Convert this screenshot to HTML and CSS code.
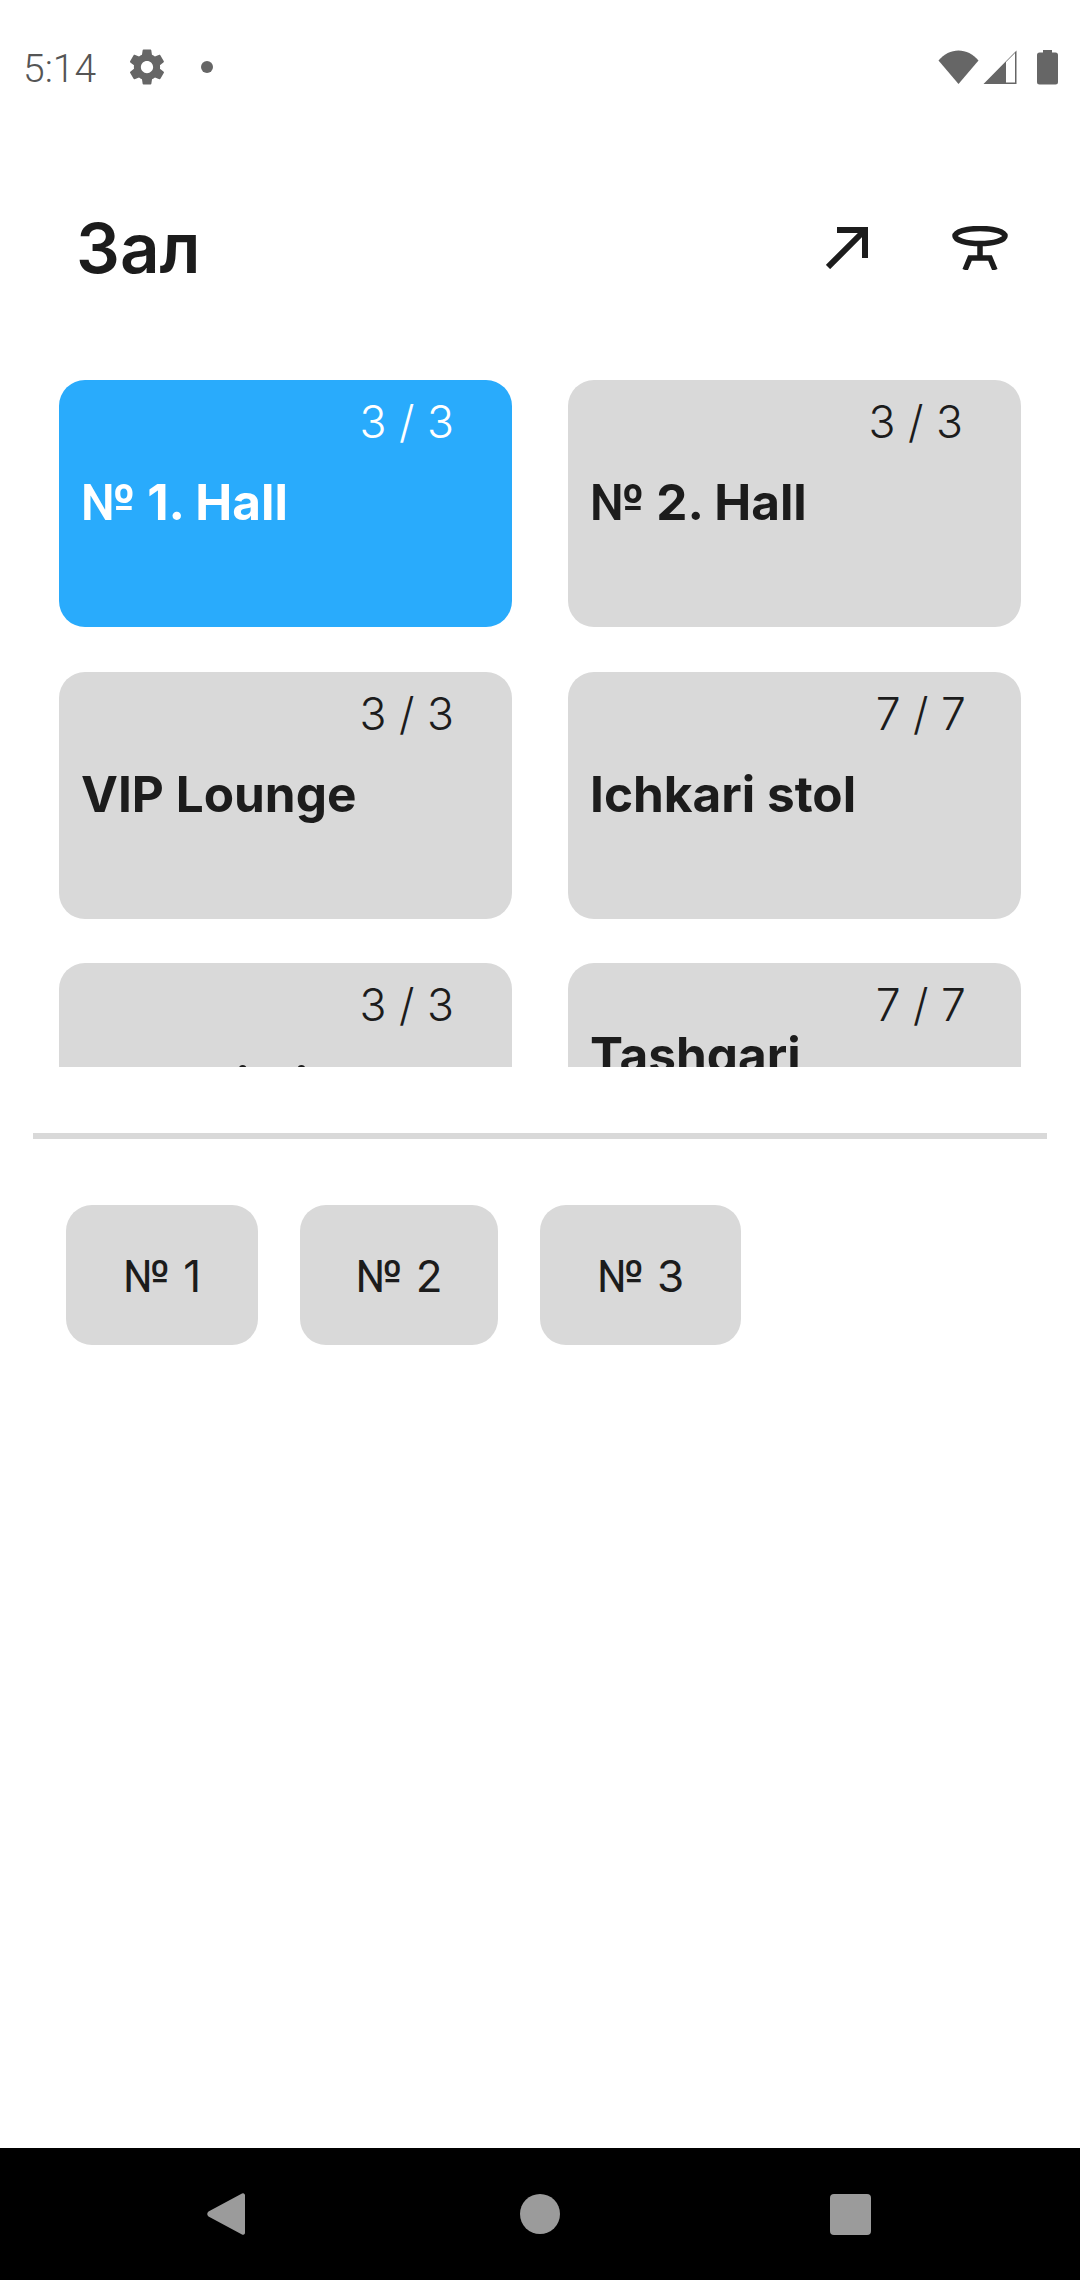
FILE: index.html
```html
<!DOCTYPE html>
<html lang="en">
<head>
    <meta charset="UTF-8">
    <meta name="viewport" content="width=device-width, initial-scale=1.0">
    <title>Зал</title>
    <link rel="stylesheet" href="styles.css">
</head>
<body>
    <div class="status-bar">
        <span class="status-time">5:14</span>
        <svg class="status-gear" viewBox="0 0 24 24"><path d="M19.4 13c.04-.33.07-.66.07-1s-.03-.67-.07-1l2.1-1.65c.19-.15.24-.42.12-.64l-2-3.46c-.12-.22-.39-.3-.61-.22l-2.49 1c-.52-.4-1.08-.73-1.69-.98l-.38-2.65C14.46 2.18 14.25 2 14 2h-4c-.25 0-.46.18-.49.42l-.38 2.65c-.61.25-1.17.59-1.69.98l-2.49-1c-.23-.09-.49 0-.61.22l-2 3.46c-.13.22-.07.49.12.64L4.57 11c-.04.33-.07.67-.07 1s.03.67.07 1l-2.11 1.65c-.19.15-.24.42-.12.64l2 3.46c.12.22.39.3.61.22l2.49-1c.52.4 1.08.73 1.69.98l.38 2.65c.03.24.24.42.49.42h4c.25 0 .46-.18.49-.42l.38-2.65c.61-.25 1.17-.59 1.69-.98l2.49 1c.23.09.49 0 .61-.22l2-3.46c.12-.22.07-.49-.12-.64L19.4 13zM12 15.5c-1.93 0-3.5-1.57-3.5-3.5s1.57-3.5 3.5-3.5 3.5 1.57 3.5 3.5-1.57 3.5-3.5 3.5z"/></svg>
        <span class="status-dot"></span>
        <span class="status-right">
            <svg class="status-wifi" viewBox="0 0 41 34"><path d="M0.5 10.5C6 4 13 0.5 20.5 0.5S35 4 40.5 10.5L20.5 34z"/></svg>
            <svg class="status-signal" viewBox="0 0 34 34"><path fill-rule="evenodd" d="M33.5 0.5V34H0.5zM23 12V32.500H32V3z"/></svg>
            <svg class="status-battery" viewBox="0 0 21 35"><path d="M6 0h9v2.500h3.500a2.500 2.500 0 0 1 2.500 2.500v27a2.500 2.500 0 0 1-2.500 2.500h-16a2.500 2.500 0 0 1-2.500-2.500v-27a2.500 2.500 0 0 1 2.500-2.500h3.500z"/></svg>
        </span>
    </div>

    <header class="top-bar">
        <h1>Зал</h1>
        <div class="top-actions">
            <svg class="icon-arrow" viewBox="0 0 42 42"><path d="M2 40L38 4M11 3H39V31"/></svg>
            <svg class="icon-table" viewBox="0 0 56 44"><ellipse cx="28" cy="10" rx="25" ry="7.500"/><path d="M28 18V33M13 44L18 32H38L43 44"/></svg>
        </div>
    </header>

    <div class="halls">
        <div class="hall hall-active">
            <span class="hall-count">3 / 3</span>
            <span class="hall-name">№ 1. Hall</span>
        </div>
        <div class="hall">
            <span class="hall-count">3 / 3</span>
            <span class="hall-name">№ 2. Hall</span>
        </div>
        <div class="hall">
            <span class="hall-count">3 / 3</span>
            <span class="hall-name">VIP Lounge</span>
        </div>
        <div class="hall">
            <span class="hall-count hall-count-narrow">7 / 7</span>
            <span class="hall-name">Ichkari stol</span>
        </div>
        <div class="hall">
            <span class="hall-count">3 / 3</span>
            <span class="hall-name">Terrasimiz</span>
        </div>
        <div class="hall">
            <span class="hall-count hall-count-narrow">7 / 7</span>
            <span class="hall-name">Tashqari<br>stol</span>
        </div>
    </div>

    <div class="divider"></div>

    <div class="tables">
        <div class="table-chip">№ 1</div>
        <div class="table-chip">№ 2</div>
        <div class="table-chip">№ 3</div>
    </div>

    <nav class="nav-bar">
        <svg class="nav-back" viewBox="0 0 38 44"><path d="M35 1.500a2 2 0 0 1 3 1.500v38a2 2 0 0 1-3 1.500L1.500 24.500a3.500 3.500 0 0 1 0-5z"/></svg>
        <span class="nav-home"></span>
        <span class="nav-recent"></span>
    </nav>
</body>
</html>
```

FILE: styles.css
```css
* {
    box-sizing: border-box;
}
body {
    margin: 0;
    width: 1080px;
    height: 2280px;
    display: flex;
    flex-direction: column;
    background: #fff;
    color: #1c1c1c;
    font-family: Inter, "Noto Sans", sans-serif;
    overflow: hidden;
}

/* Status bar */
.status-bar {
    height: 134px;
    padding: 0 22px 0 23px;
    display: flex;
    align-items: center;
    fill: #666;
}
.status-time {
    padding-top: 3px;
    font-family: Roboto, sans-serif;
    font-size: 39px;
    font-weight: 300;
    color: #555;
    width: 103px;
}
.status-gear {
    width: 42px;
    height: 42px;
}
.status-dot {
    width: 12px;
    height: 12px;
    margin-left: 33px;
    border-radius: 50%;
    background: #666;
}
.status-right {
    margin-left: auto;
    display: flex;
    align-items: center;
    gap: 4px;
}
.status-wifi {
    width: 41px;
    height: 34px;
}
.status-signal {
    width: 34px;
    height: 34px;
}
.status-battery {
    width: 21px;
    height: 35px;
    margin-left: 16px;
}

/* Header */
.top-bar {
    height: 112px;
    margin-top: 58px;
    padding: 0 72px 0 76px;
    display: flex;
    align-items: center;
    justify-content: space-between;
}
.top-bar h1 {
    margin: 0;
    font-size: 69px;
    font-weight: 600;
}
.top-actions {
    display: flex;
    align-items: center;
    gap: 84px;
}
.icon-arrow {
    width: 42px;
    height: 42px;
    fill: none;
    stroke: #1c1c1c;
    stroke-width: 6;
}
.icon-table {
    width: 56px;
    height: 44px;
    fill: none;
    stroke: #1c1c1c;
    stroke-width: 5.500;
}

/* Hall grid, cut off by the scroll area */
.halls {
    height: 687px;
    margin-top: 76px;
    padding: 0 59px;
    display: grid;
    grid-template-columns: 453px 453px;
    grid-auto-rows: 247px;
    justify-content: space-between;
    row-gap: 44.500px;
    overflow: hidden;
}
.hall {
    padding: 14px 22px 73px;
    display: flex;
    flex-direction: column;
    border-radius: 26px;
    background: #d9d9d9;
}
.hall-active {
    background: #29abfc;
    color: #fff;
}
.hall-count {
    height: 56px;
    padding-right: 36px;
    font-size: 44.500px;
    font-weight: 300;
    line-height: 56px;
    text-align: right;
}
.hall-count-narrow {
    padding-right: 33px;
}
.hall-name {
    flex: 1;
    min-height: 0;
    display: flex;
    align-items: center;
    font-size: 49.500px;
    font-weight: 700;
    line-height: 60px;
}

.divider {
    height: 6px;
    margin: 66px 33px 0;
    background: #d9d9d9;
}

/* Table chips */
.tables {
    margin-top: 66px;
    padding-left: 66px;
    display: flex;
    gap: 42px;
}
.table-chip {
    width: 192px;
    height: 140px;
    padding-top: 2px;
    display: flex;
    align-items: center;
    justify-content: center;
    border-radius: 26px;
    background: #d9d9d9;
    font-size: 44px;
}
.table-chip:nth-child(2) {
    width: 198px;
}
.table-chip:nth-child(3) {
    width: 201px;
}

/* Android nav bar */
.nav-bar {
    height: 132px;
    margin-top: auto;
    display: flex;
    align-items: center;
    background: #000;
    padding-left: 207px;
}
.nav-back {
    width: 38px;
    height: 44px;
    fill: #9b9b9b;
}
.nav-home {
    width: 40px;
    height: 40px;
    margin-left: 275px;
    border-radius: 50%;
    background: #9b9b9b;
}
.nav-recent {
    width: 41px;
    height: 41px;
    margin-left: 270px;
    border-radius: 4px;
    background: #9b9b9b;
}
```
